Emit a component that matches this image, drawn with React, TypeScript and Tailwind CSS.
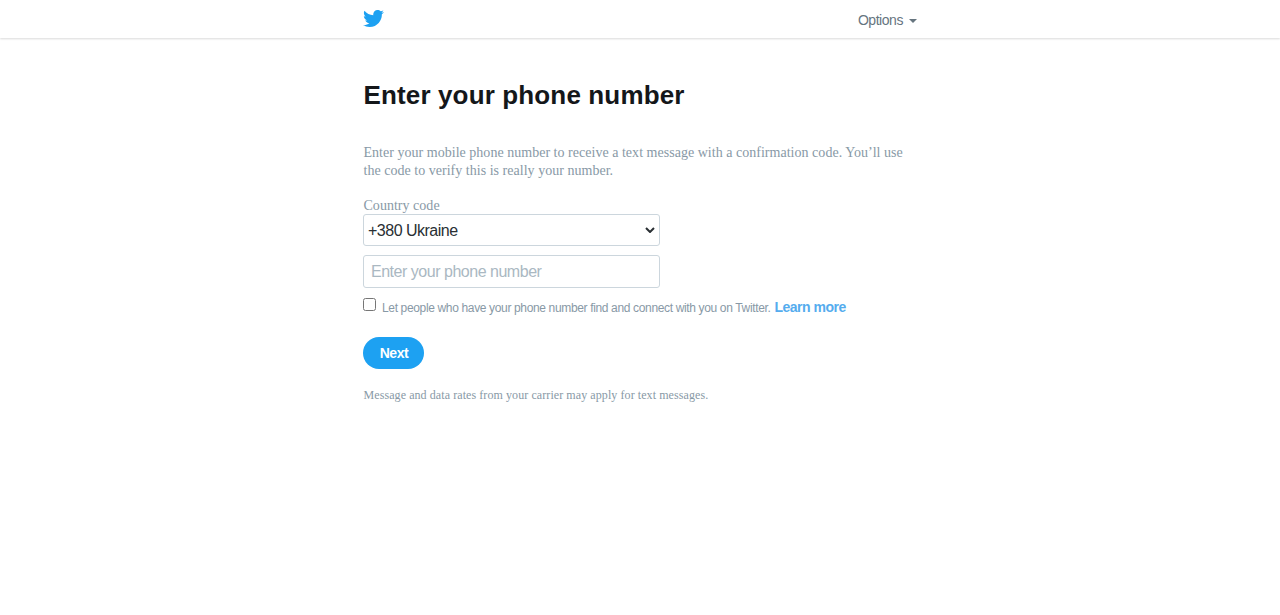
import React, { useState } from 'react';
import { FaTwitter } from 'react-icons/fa';

const countries = ['+380 Ukraine', '+1 United States', '+44 United Kingdom'];

const TopBar = () => (
  <header className="h-[38px] bg-white shadow-[0_1px_2px_rgba(0,0,0,0.15)]">
    <div className="ml-[363px] flex h-full w-[554px] items-center justify-between">
      <a href="#" aria-label="Twitter" className="-mt-px text-[#1da1f2]">
        <FaTwitter size={21} />
      </a>
      <button className="flex items-center gap-1.5 pt-[2px] text-[14px] leading-4 tracking-[-0.45px] text-[#66757f]">
        Options
        <span className="mt-[2px] border-x-4 border-t-4 border-x-transparent border-t-[#66757f]" />
      </button>
    </div>
  </header>
);

export default function App() {
  const [country, setCountry] = useState(countries[0]);
  const [phone, setPhone] = useState('');
  const [discoverable, setDiscoverable] = useState(false);

  return (
    <div className="min-h-screen bg-white font-['Liberation_Sans',Arial,sans-serif]">
      <TopBar />
      <main className="ml-[363.5px] w-[554px] pt-[41px]">
        <h1 className="text-[26px] leading-8 font-bold tracking-[0.14px] text-[#14171a]">Enter your phone number</h1>

        <div className="mt-[33px] font-['Liberation_Serif','Times_New_Roman',serif] text-[14px] leading-[18px] tracking-[0.025px] text-[#8899a6]">
          <p>
            Enter your mobile phone number to receive a text message with a confirmation code. You’ll use the code to
            verify this is really your number.
          </p>
          <label htmlFor="country" className="mt-[17px] block h-[17px]">Country code</label>
        </div>

        <form className="-ml-[0.5px] flex flex-col items-start" onSubmit={(e) => e.preventDefault()}>
          <div className="relative w-[297px]">
            <select
              id="country"
              value={country}
              onChange={(e) => setCountry(e.target.value)}
              className="block h-8 w-full appearance-none rounded-[3px] border border-[#ccd6dd] bg-white px-1 pt-0.5 text-base leading-5 tracking-[-0.5px] text-[#292f33]"
            >
              {countries.map((name) => (
                <option key={name}>{name}</option>
              ))}
            </select>
            <svg
              viewBox="0 0 10 6"
              className="pointer-events-none absolute top-[13px] right-[5px] h-1.5 w-2.5 fill-none stroke-[#292f33] stroke-2"
            >
              <path d="M1 1l4 4 4-4" />
            </svg>
          </div>
          <input
            type="tel"
            value={phone}
            onChange={(e) => setPhone(e.target.value)}
            placeholder="Enter your phone number"
            className="mt-[9px] h-[33px] w-[297px] rounded-[3px] border border-[#ccd6dd] px-[7px] pt-px text-base tracking-[-0.48px] text-[#292f33] placeholder:text-[#aab8c2]"
          />
          <div className="mt-[9px] flex h-5 items-start whitespace-nowrap">
            <input
              id="discoverable"
              type="checkbox"
              checked={discoverable}
              onChange={(e) => setDiscoverable(e.target.checked)}
              className="mt-px size-[13px]"
            />
            <label htmlFor="discoverable" className="ml-1.5 pt-[3px] text-[12px] leading-4 tracking-[-0.35px] text-[#8899a6]">
              Let people who have your phone number find and connect with you on Twitter.
            </label>
            <a href="#" className="ml-1 pt-[2px] text-[14px] leading-4 font-bold tracking-[-0.5px] text-[#55acee]">Learn more</a>
          </div>
          <button className="mt-5 h-8 w-[61px] rounded-full bg-[#1da1f2] pt-px pl-px text-[14px] font-bold tracking-[-0.4px] text-white">
            Next
          </button>
        </form>

        <p className="mt-[18px] font-['Liberation_Serif','Times_New_Roman',serif] text-[12px] leading-4 tracking-[0.08px] text-[#8899a6]">
          Message and data rates from your carrier may apply for text messages.
        </p>
      </main>
    </div>
  );
}
